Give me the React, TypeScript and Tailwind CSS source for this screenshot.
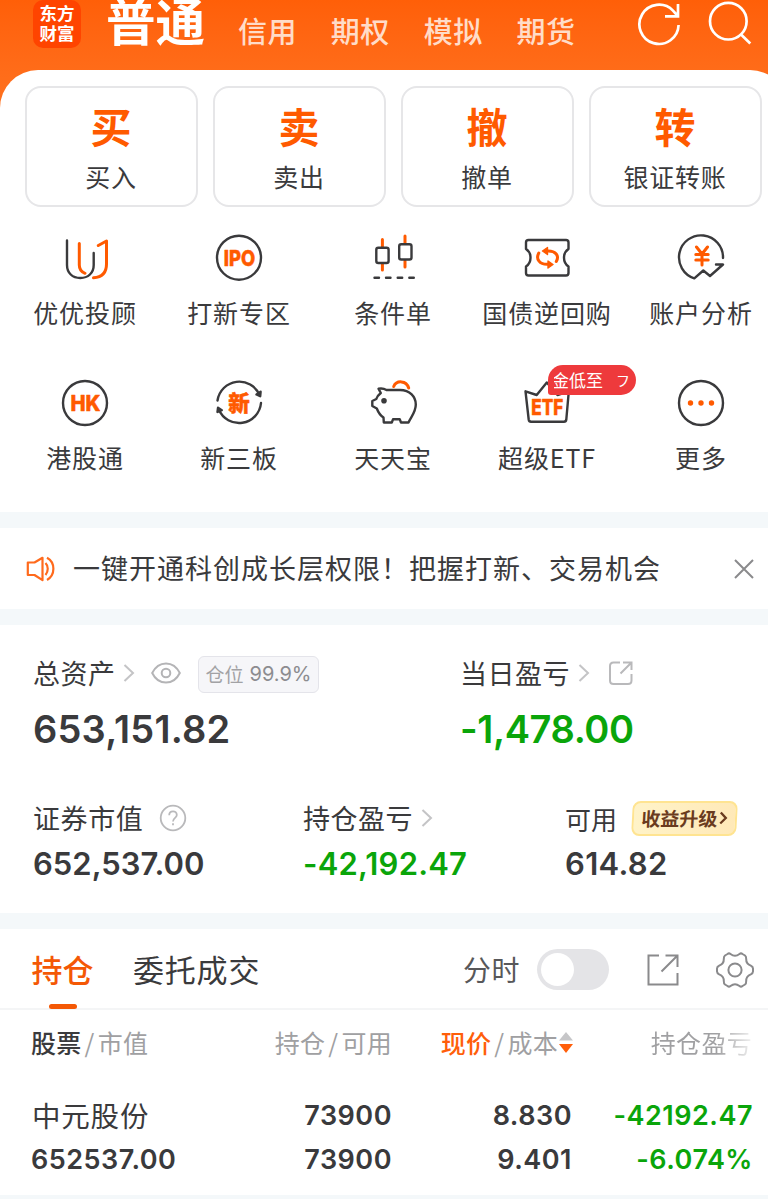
import type { ReactNode } from "react";

const INK = "#3a3a3c";
const ORANGE = "#ff5a00";

const headerTabs = ["信用", "期权", "模拟", "期货"];

const actions = [
  { glyph: "买", label: "买入" },
  { glyph: "卖", label: "卖出" },
  { glyph: "撤", label: "撤单" },
  { glyph: "转", label: "银证转账" },
];

function IconBox({ children }: { children: ReactNode }) {
  return (
    <svg
      width="48"
      height="48"
      viewBox="0 0 48 48"
      fill="none"
      stroke={INK}
      strokeWidth="2.4"
      strokeLinecap="round"
      strokeLinejoin="round"
    >
      {children}
    </svg>
  );
}

function IconText({ x, y, size, width, children }: { x: number; y: number; size: number; width: number; children: string }) {
  return (
    <text
      x={x}
      y={y}
      fontSize={size}
      textLength={width}
      lengthAdjust="spacingAndGlyphs"
      fontWeight="800"
      fontFamily="Inter, 'Noto Sans CJK SC', sans-serif"
      fill={ORANGE}
      stroke={ORANGE}
      strokeWidth="0.5"
    >
      {children}
    </text>
  );
}

const services: { label: string; icon: ReactNode; badge?: boolean }[] = [
  {
    label: "优优投顾",
    icon: (
      <IconBox>
        <path d="M6 6.5V31C6 39 11.5 44 19.3 44S32.7 39 32.7 31V19" />
        <path d="M18.3 9.5V31C18.3 35 20.5 38 24 39.3" stroke={ORANGE} strokeWidth="3" />
        <path d="M37.3 11.5L45.5 7V30C45.5 39 40.5 43.3 32.5 43.8" stroke={ORANGE} strokeWidth="3" />
      </IconBox>
    ),
  },
  {
    label: "打新专区",
    icon: (
      <IconBox>
        <circle cx="24" cy="23.7" r="22" />
        <IconText x={8.7} y={31.5} size={21} width={31.5}>IPO</IconText>
      </IconBox>
    ),
  },
  {
    label: "条件单",
    icon: (
      <IconBox>
        <path d="M13.4 5.5V12.5M13.4 30V36M36 2V9M36 27V33" stroke={ORANGE} strokeWidth="3" />
        <rect x="7.3" y="13.7" width="12.3" height="15.3" rx="2" />
        <rect x="30.2" y="10.2" width="12.3" height="15.3" rx="2" />
        <path d="M5.5 43.8H10M17 43.8H21.5M28.7 43.8H33.2M40.3 43.8H44.8" />
      </IconBox>
    ),
  },
  {
    label: "国债逆回购",
    icon: (
      <IconBox>
        <path d="M5.5 6H43Q45.5 6 45.5 8.5V15Q41 18 41 23.7T45.5 32.5V39Q45.5 41.5 43 41.5H5.5Q3 41.5 3 39V32.5Q7.5 29.5 7.5 23.7T3 15V8.5Q3 6 5.5 6Z" />
        <path d="M15.8 19C12.5 25 16.5 31 25.5 30.3" stroke={ORANGE} strokeWidth="3" />
        <path d="M33.3 27.5C36.5 22 33 16.5 24 17" stroke={ORANGE} strokeWidth="3" />
        <path d="M24.5 13.5L19.5 17L24.5 20.5ZM25 27L30 30.5L25 34Z" fill={ORANGE} stroke={ORANGE} strokeWidth="1.4" />
      </IconBox>
    ),
  },
  {
    label: "账户分析",
    icon: (
      <IconBox>
        <path d="M46 24A22 22 0 1 0 17.3 44.3L26.3 36.5L33 42L46 30.5H39" />
        <path d="M19.5 13L25 20L30.5 13M25 20V31M18.8 20.5H31.2M18.8 26H31.2" stroke={ORANGE} strokeWidth="3" />
      </IconBox>
    ),
  },
  {
    label: "港股通",
    icon: (
      <IconBox>
        <circle cx="24" cy="24" r="22" />
        <IconText x={9.5} y={31.5} size={21} width={30}>HK</IconText>
      </IconBox>
    ),
  },
  {
    label: "新三板",
    icon: (
      <IconBox>
        <path d="M2.5 21.5A22 22 0 0 1 44.5 16M46 24A22 22 0 0 1 3.8 30.5" />
        <path d="M41.5 15.5L45.2 17.2L45.6 12.8ZM2.5 33L3 28.8L6.8 31.2Z" fill={INK} />
        <IconText x={13.3} y={31.8} size={21.5} width={21.5}>新</IconText>
      </IconBox>
    ),
  },
  {
    label: "天天宝",
    icon: (
      <IconBox>
        <path d="M9.5 9.7Q14 8.8 17.5 11H31C41 11 46.8 18 46.8 25.5C46.8 33 42.5 37 39.5 43.5H32L30.8 40.3H24L22.8 43.5H14.8L14.5 38.5C11.5 36.5 9.5 34 7.8 29.5L3.3 27V22L7.3 20C8 17.5 9.5 15.8 11.8 14Z" />
        <circle cx="15" cy="21.8" r="1.6" fill={INK} />
        <path d="M24.7 7.5C27.5 1 37.5 1.2 39.7 9" stroke={ORANGE} strokeWidth="3" />
      </IconBox>
    ),
  },
  {
    label: "超级ETF",
    badge: true,
    icon: (
      <IconBox>
        <path d="M2.5 12.3L13.7 16L23.8 3.5L34.5 16L45.8 12.3L43.3 40.5Q43 42.7 41 42.7H8Q6 42.7 5.7 40.5Z" />
        <IconText x={8.3} y={36} size={21} width={32}>ETF</IconText>
      </IconBox>
    ),
  },
  {
    label: "更多",
    icon: (
      <IconBox>
        <circle cx="24" cy="24" r="22" />
        <g fill={ORANGE} stroke="none">
          <circle cx="13.5" cy="24" r="2.7" />
          <circle cx="24" cy="24" r="2.7" />
          <circle cx="34.5" cy="24" r="2.7" />
        </g>
      </IconBox>
    ),
  },
];

function Chevron() {
  return (
    <svg width="12" height="20" viewBox="0 0 12 20" fill="none" stroke="#c4c4c6" strokeWidth="2">
      <path d="M1.5 2L10 10L1.5 18" />
    </svg>
  );
}

function Header() {
  return (
    <header className="flex h-[70px] items-start pl-[33px]">
      <div className="flex h-12 w-12 shrink-0 flex-col items-center rounded-[10px] bg-[#ff4400] pt-[3px] text-[17.5px] font-bold leading-[20px] text-white">
        <span>东方</span>
        <span>财富</span>
      </div>
      <h1 className="-mt-[6px] ml-[25px] w-[105px] whitespace-nowrap text-[49.5px] font-bold leading-[52px] text-white">普通</h1>
      <nav className="ml-[27px] mt-[8px] flex gap-[33.8px] text-[29px] font-medium leading-[44px] tracking-[0.5px] text-[#ffdcc8]">
        {headerTabs.map((tab) => (
          <span key={tab}>{tab}</span>
        ))}
      </nav>
      <svg className="ml-[61px] shrink-0" width="46" height="48" viewBox="0 0 46 48" fill="none" stroke="#fff" strokeWidth="2.7">
        <path d="M42.6 25A19.6 19.6 0 1 1 37 10.6L41.8 16M42 4V16.3H29" />
      </svg>
      <svg className="ml-[25px] shrink-0" width="46" height="48" viewBox="0 0 46 48" fill="none" stroke="#fff" strokeWidth="2.7">
        <circle cx="21.3" cy="21.2" r="18.3" />
        <path d="M34 34.5L43.3 43.5" />
      </svg>
    </header>
  );
}

function TradePanel() {
  return (
    <section className="h-[442px] w-[788px] rounded-t-[38px] bg-white pt-4">
      <div className="flex gap-[15px] pl-[25px]">
        {actions.map((a) => (
          <div key={a.label} className="flex h-[121px] w-[173px] flex-col items-center rounded-2xl border-2 border-[#e6e6e8] pr-px">
            <span className="mt-[13px] text-[41px] font-bold leading-[48px] text-[#ff5a00]">{a.glyph}</span>
            <span className="mt-[11px] text-[25px] leading-[32px] tracking-[0.8px]">{a.label}</span>
          </div>
        ))}
      </div>
      <div className="ml-2 mt-[27px] grid w-[770px] grid-cols-5">
        {services.map((s) => (
          <div key={s.label} className="relative flex h-[145px] flex-col items-center">
            {s.icon}
            <span className="mt-[13px] whitespace-nowrap text-[25px] leading-[34px] tracking-[0.9px]">{s.label}</span>
            {s.badge && (
              <div className="absolute left-[78px] top-[-14px] flex h-[30px] w-[88px] items-center rounded-[15px] rounded-bl-[3px] bg-[#ee3a3c] px-[6px] text-[17px] leading-[30px] text-white">
                <div className="flex w-full justify-between overflow-hidden">
                  <span className="-ml-[2px]">金低至</span>
                  <span className="text-[14px]">フ</span>
                </div>
              </div>
            )}
          </div>
        ))}
      </div>
    </section>
  );
}

function Notice() {
  return (
    <section className="flex h-[81px] items-center bg-white pl-[26px]">
      <svg width="30" height="28" viewBox="0 0 30 28" fill="none" stroke="#ff6a1c" strokeWidth="2.2" strokeLinejoin="round">
        <path d="M1.8 7.5H8.5L16.5 2.8V25.2L8.5 20H1.8Z" />
        <path d="M19.5 8C22.5 11 22.5 16.5 19.5 20M21 2.8C29.5 7.5 29.5 20 21 25" />
      </svg>
      <p className="ml-[17px] w-[600px] whitespace-nowrap pb-px text-[27px] leading-[36px] tracking-[1px]">一键开通科创成长层权限！把握打新、交易机会</p>
      <svg className="ml-[61px]" width="20" height="20" viewBox="0 0 20 20" stroke="#8a8a8c" strokeWidth="2">
        <path d="M1 1L19 19M19 1L1 19" />
      </svg>
    </section>
  );
}

function Assets() {
  return (
    <section className="h-[288px] bg-white pl-[33px] pt-[30px] text-[27px]">
      <div className="grid grid-cols-[427px_1fr]">
        <div>
          <div className="flex h-9 items-center">
            <span className="w-[90px] tracking-[0.5px]">总资产</span>
            <Chevron />
            <svg className="ml-[16px]" width="30" height="22" viewBox="0 0 30 22" fill="none" stroke="#b4b4b6" strokeWidth="2">
              <path d="M1.2 11C7.5-1.8 22.5-1.8 28.8 11C22.5 23.8 7.5 23.8 1.2 11Z" />
              <circle cx="15" cy="11" r="4.3" />
            </svg>
            <div className="ml-[17px] mt-[2px] flex h-[37px] w-[121px] items-center justify-center rounded-md border border-[#e4e4ea] bg-[#f6f6f9] text-[19px] text-[#a2a2a5]">
              仓位<span className="ml-[6px] font-[Inter] text-[20px] text-[#8c8c90]">99.9%</span>
            </div>
          </div>
          <div className="mt-[14px] font-[Inter] text-[38px] font-semibold leading-[48px] tracking-[0.2px]">653,151.82</div>
        </div>
        <div>
          <div className="flex h-9 items-center">
            <span className="w-[118px] tracking-[0.5px]">当日盈亏</span>
            <Chevron />
            <svg className="ml-[18px]" width="26" height="26" viewBox="0 0 26 26" fill="none" stroke="#b9b9bb" strokeWidth="2">
              <path d="M12 2.5H5.5Q2 2.5 2 6V20.5Q2 24 5.5 24H20Q23.5 24 23.5 20.5V14M15 2.5H23.5V10M23.5 2.5L12.5 13.5" />
            </svg>
          </div>
          <div className="mt-[14px] font-[Inter] text-[38px] font-semibold leading-[48px] tracking-[-0.4px] text-[#0aa50a]">-1,478.00</div>
        </div>
      </div>
      <div className="mt-[47px] grid grid-cols-[270px_262px_1fr]">
        <div>
          <div className="flex h-9 items-center">
            <span className="tracking-[0.6px]">证券市值</span>
            <svg className="ml-[16px]" width="28" height="28" viewBox="0 0 28 28" fill="none" stroke="#b9b9bb" strokeWidth="1.8">
              <circle cx="14" cy="14" r="12.3" />
              <path d="M10.2 11.3C10.2 6 17.8 6 17.8 11C17.8 14 14 13.8 14 17.5M14 19.3V21.3" />
            </svg>
          </div>
          <div className="mt-[8px] font-[Inter] text-[31px] font-semibold leading-10">652,537.00</div>
        </div>
        <div>
          <div className="flex h-9 items-center">
            <span className="w-[118px] tracking-[0.5px]">持仓盈亏</span>
            <Chevron />
          </div>
          <div className="mt-[8px] font-[Inter] text-[31px] font-semibold leading-10 tracking-[0.2px] text-[#0aa50a]">-42,192.47</div>
        </div>
        <div>
          <div className="flex h-9 items-center">
            <span className="w-[67px] text-[26px]">可用</span>
            <div className="flex h-[35px] w-[105px] -skew-x-3 items-center justify-center rounded-lg border-2 border-[#ffe491] bg-gradient-to-r from-[#fff3c8] to-[#ffe9b8] pb-px text-[19px] font-bold text-[#6a3b1e]">
              收益升级
              <svg className="ml-px" width="9" height="16" viewBox="0 0 9 16" fill="none" stroke="#6a3b1e" strokeWidth="2.3">
                <path d="M1.5 2.5L6.8 8L1.5 13.5" />
              </svg>
            </div>
          </div>
          <div className="mt-[8px] font-[Inter] text-[31px] font-semibold leading-10 tracking-[0.3px]">614.82</div>
        </div>
      </div>
    </section>
  );
}

function PositionTabs() {
  return (
    <div className="flex h-[81px] border-b-2 border-[#f4f5f6] bg-white pl-[31px]">
      <div className="flex w-[63px] flex-col items-center">
        <span className="mt-[20px] whitespace-nowrap text-[31px] font-medium leading-10 text-[#f45805]">持仓</span>
        <i className="mt-[15px] h-[5px] w-7 shrink-0 rounded-sm bg-[#f45805]" />
      </div>
      <span className="ml-[39px] mt-[20px] w-[330px] text-[31px] leading-10 tracking-[0.8px]">委托成交</span>
      <span className="mt-[20px] w-[74px] text-[28px] leading-10 tracking-[0.5px] text-[#58585a]">分时</span>
      <div className="mt-[20px] flex h-[41px] w-[72px] items-center rounded-full bg-[#e4e4e7] pl-[4px]">
        <span className="h-[33px] w-[33px] rounded-full bg-white" />
      </div>
      <svg className="ml-[37px] mt-[24px]" width="34" height="34" viewBox="0 0 34 34" fill="none" stroke="#8a8a8c" strokeWidth="2">
        <path d="M13 2.5H2.5V31.5H31.5V20M19.5 2.5H31.5V14M31.5 2.5L15.5 18.5" />
      </svg>
      <svg className="ml-[36px] mt-[22px]" width="38" height="38" viewBox="0 0 38 38" fill="none" stroke="#8a8a8c" strokeWidth="2" strokeLinejoin="round">
        <path d="M11.5 3Q13 1.8 14.5 3Q19 6.5 23.5 3Q25 1.8 26.5 3L29 4.5Q30.3 5.5 30.2 8Q30 12.7 34.8 14.7Q37 15.8 37 17.5V20.5Q37 22.2 34.8 23.3Q30 25.3 30.2 30Q30.3 32.5 29 33.5L26.5 35Q25 36.2 23.5 35Q19 31.5 14.5 35Q13 36.2 11.5 35L9 33.5Q7.7 32.5 7.8 30Q8 25.3 3.2 23.3Q1 22.2 1 20.5V17.5Q1 15.8 3.2 14.7Q8 12.7 7.8 8Q7.7 5.5 9 4.5Z" />
        <circle cx="19" cy="19" r="6.6" />
      </svg>
    </div>
  );
}

function Slash() {
  return <span className="mx-[3px] inline-block">/</span>;
}

function Positions() {
  return (
    <section className="h-[185px] bg-white">
      <div className="grid h-[66px] w-[752px] grid-cols-[181px_180px_182px_178px] items-center pl-[31px] text-[25px] tracking-[0.3px] text-[#a0a0a2]">
        <span>
          <b className="font-medium text-[#3a3a3c]">股票</b>
          <Slash />
          市值
        </span>
        <span className="text-right">
          持仓
          <Slash />
          可用
        </span>
        <span className="flex items-center justify-end">
          <b className="font-medium text-[#ff5e0a]">现价</b>
          <Slash />
          成本
          <svg width="16" height="24" viewBox="0 0 16 24">
            <path d="M8 1L15 9.5H1Z" fill="#c6c6c8" />
            <path d="M1 13H15L8 22Z" fill="#ff5e0a" />
          </svg>
        </span>
        <span className="bg-gradient-to-r from-[#a0a0a2] from-80% to-[#f0f0f0] bg-clip-text text-right text-transparent">持仓盈亏</span>
      </div>
      <div className="mt-[18px] grid w-[753px] grid-cols-[180px_180px_180px_181px] pl-8 text-right font-[Inter] text-[27px] font-semibold leading-[44px] tracking-[0.5px]">
        <span className="-mt-px text-left font-['Noto_Sans_CJK_SC'] text-[28.5px] font-normal tracking-[0.8px]">中元股份</span>
        <span>73900</span>
        <span>8.830</span>
        <span className="text-[#0aa50a]">-42192.47</span>
        <span className="-ml-px text-left">652537.00</span>
        <span>73900</span>
        <span>9.401</span>
        <span className="text-[#0aa50a]">-6.074%</span>
      </div>
    </section>
  );
}

export default function App() {
  return (
    <main className="h-[1199px] w-[768px] overflow-hidden bg-[#f4f8fa] font-['Noto_Sans_CJK_SC',sans-serif] text-[#3a3a3c]">
      <div className="bg-gradient-to-b from-[#ff5f08] to-[#ff6f1c] to-[90px]">
        <Header />
        <TradePanel />
      </div>
      <div className="h-4" />
      <Notice />
      <div className="h-4" />
      <Assets />
      <div className="h-4" />
      <PositionTabs />
      <Positions />
    </main>
  );
}
